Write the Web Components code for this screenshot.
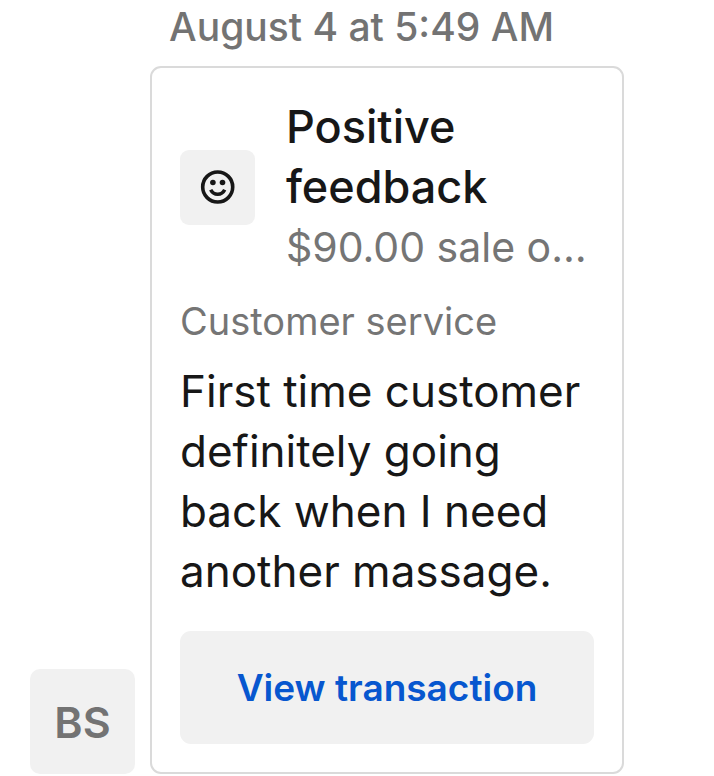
<!DOCTYPE html>
<html lang="en">
<head>
<meta charset="utf-8">
<meta name="viewport" content="width=device-width, initial-scale=1">
<title>Customer feedback</title>
<style>
body{margin:0;background:#fff;color:#171717;font-family:Inter,"Liberation Sans",sans-serif}
</style>
</head>
<body>
<message-thread>
  <time-stamp slot="time">August 4 at 5:49 AM</time-stamp>
  <user-avatar slot="avatar">BS</user-avatar>
  <feedback-card>
    <span slot="title">Positive feedback</span>
    <span slot="detail">$90.00 sale on Aug 4</span>
    <span slot="topic">Customer service</span>
    First time customer definitely going back when I need another massage.
    <action-button slot="action">View transaction</action-button>
  </feedback-card>
</message-thread>
<script>
function define(name, markup){
  const t=document.createElement('template');
  t.innerHTML=markup;
  customElements.define(name,class extends HTMLElement{
    constructor(){super();this.attachShadow({mode:'open'}).append(t.content.cloneNode(true));}
  });
}
define('time-stamp',`<style>
:host{display:block;font-size:39px;line-height:42px;font-weight:500;color:#737373;text-align:center}
</style><slot></slot>`);
define('user-avatar',`<style>
:host{display:grid;place-items:center;flex:none;box-sizing:border-box;width:105px;height:105px;border-radius:10px;background:#f1f1f1;color:#737373;font-size:43px;font-weight:600}
</style><slot></slot>`);
define('smile-icon',`<style>
:host{display:grid;place-items:center;flex:none;width:75px;height:75px;border-radius:9px;background:#f1f1f1}
svg{width:36px;height:36px}
</style><svg viewBox="0 0 36 36" fill="none" stroke="#171717" stroke-width="3.6" aria-hidden="true">
<circle cx="17.7" cy="18" r="15"/><path d="M10.7 20.8c3 6 11 6 14 0"/><circle cx="12.9" cy="13.5" r="2.8" fill="#171717" stroke="none"/><circle cx="22.5" cy="13.5" r="2.8" fill="#171717" stroke="none"/></svg>`);
define('action-button',`<style>
:host{display:block}
button{display:block;width:100%;padding:32px 16px;border:0;border-radius:11px;background:#f1f1f1;color:#0757cf;font:600 37px/49px Inter,"Liberation Sans",sans-serif;cursor:pointer}
</style><button type="button"><slot></slot></button>`);
define('feedback-card',`<style>
:host{display:block;box-sizing:border-box;min-width:0;flex:1;border:2px solid #dadada;border-radius:11px;padding:29px 28px 28px}
header{display:flex;align-items:center;gap:31px}
.text{min-width:0;flex:1}
h2,p{margin:0;font-size:44px;line-height:60px;font-weight:400}
h2{font-size:45px;font-weight:500}
.detail{font-size:41px;white-space:nowrap;overflow:hidden;text-overflow:ellipsis;color:#757575}
.topic{font-size:38px;line-height:54px;margin:17px 0 13px;color:#757575}
.body{margin-bottom:30px}
</style><header><smile-icon></smile-icon><div class="text"><h2><slot name="title"></slot></h2><p class="detail"><slot name="detail"></slot></p></div></header>
<p class="topic"><slot name="topic"></slot></p><p class="body"><slot></slot></p><slot name="action"></slot>`);
define('message-thread',`<style>
:host{display:block;padding:6px 90px 3px 30px}
.time{padding-left:69px;margin-bottom:18px}
.row{display:flex;align-items:flex-end;gap:15px}
</style><div class="time"><slot name="time"></slot></div><div class="row"><slot name="avatar"></slot><slot></slot></div>`);
</script>
</body>
</html>
